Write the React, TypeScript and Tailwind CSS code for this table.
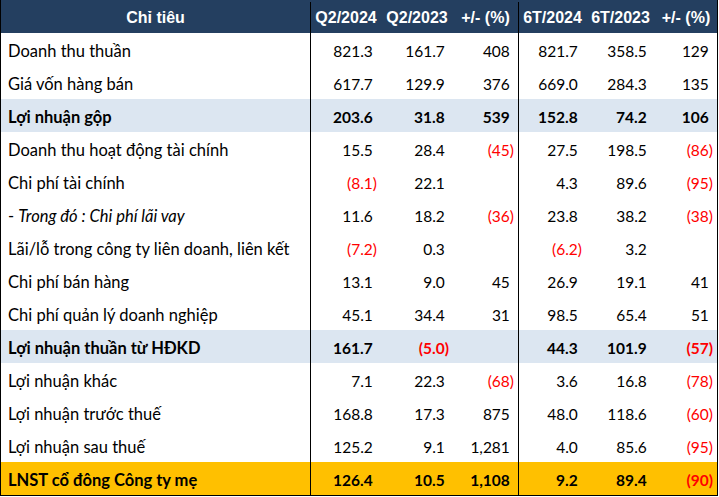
type Row = {
  label: string
  values: string[]
  tone?: "blue" | "yellow"
  italic?: boolean
}

const ROWS: Row[] = [
  { label: "Doanh thu thuần", values: ["821.3", "161.7", "408", "821.7", "358.5", "129"] },
  { label: "Giá vốn hàng bán", values: ["617.7", "129.9", "376", "669.0", "284.3", "135"] },
  { label: "Lợi nhuận gộp", values: ["203.6", "31.8", "539", "152.8", "74.2", "106"], tone: "blue" },
  { label: "Doanh thu hoạt động tài chính", values: ["15.5", "28.4", "(45)", "27.5", "198.5", "(86)"] },
  { label: "Chi phí tài chính", values: ["(8.1)", "22.1", "", "4.3", "89.6", "(95)"] },
  { label: "Trong đó : Chi phí lãi vay", values: ["11.6", "18.2", "(36)", "23.8", "38.2", "(38)"], italic: true },
  { label: "Lãi/lỗ trong công ty liên doanh, liên kết", values: ["(7.2)", "0.3", "", "(6.2)", "3.2", ""] },
  { label: "Chi phí bán hàng", values: ["13.1", "9.0", "45", "26.9", "19.1", "41"] },
  { label: "Chi phí quản lý doanh nghiệp", values: ["45.1", "34.4", "31", "98.5", "65.4", "51"] },
  { label: "Lợi nhuận thuần từ HĐKD", values: ["161.7", "(5.0)", "", "44.3", "101.9", "(57)"], tone: "blue" },
  { label: "Lợi nhuận khác", values: ["7.1", "22.3", "(68)", "3.6", "16.8", "(78)"] },
  { label: "Lợi nhuận trước thuế", values: ["168.8", "17.3", "875", "48.0", "118.6", "(60)"] },
  { label: "Lợi nhuận sau thuế", values: ["125.2", "9.1", "1,281", "4.0", "85.6", "(95)"] },
  { label: "LNST cổ đông Công ty mẹ", values: ["126.4", "10.5", "1,108", "9.2", "89.4", "(90)"], tone: "yellow" },
]

const HEADERS = ["Q2/2024", "Q2/2023", "+/- (%)", "6T/2024", "6T/2023", "+/- (%)"]

// widths of the six number columns (border of col 3 included)
const COL_CLASS = [
  "w-[70px]",
  "w-[72px]",
  "w-[66px] border-r border-black",
  "w-[67px]",
  "w-[69px]",
  "w-[62px]",
]

const ROW_BG = {
  blue: "bg-[#dce6f1] font-bold",
  yellow: "bg-[#ffc000] font-bold",
}

function NumberCell({ value, className }: { value: string; className: string }) {
  const negative = value.startsWith("(")
  return (
    <div className={`flex h-full items-center justify-end pr-[4px] pt-[4px] text-[15.5px] ${className}`}>
      {negative ? (
        <span className="text-[#ff0000]">{value}</span>
      ) : value ? (
        <span>
          {value}
          <span className="invisible">)</span>
        </span>
      ) : null}
    </div>
  )
}

export default function App() {
  return (
    <div className="h-[497px] w-[719px] bg-white">
      <div className="w-[718px] border-x border-b border-black font-['Lato',sans-serif] text-black">
        <div className="flex h-[33px] bg-[#243f60] pt-[2px] font-['Liberation_Sans',Arial,sans-serif] text-[16px] font-bold text-white">
          <div className="flex w-[310px] items-center justify-center border-r border-black">Chỉ tiêu</div>
          {HEADERS.map((h, i) => (
            <div key={i} className={`flex items-center justify-center whitespace-nowrap ${COL_CLASS[i]}`}>
              {h}
            </div>
          ))}
        </div>
        {ROWS.map((row) => (
          <div key={row.label} className={`flex h-[33px] ${row.tone ? ROW_BG[row.tone] : ""}`}>
            <div className="flex w-[310px] items-center whitespace-nowrap border-r border-black pl-[7px] pt-[4px] text-[16.5px]">
              {row.italic ? (
                <>
                  <span>-&nbsp;</span>
                  <span className="italic">{row.label}</span>
                </>
              ) : (
                row.label
              )}
            </div>
            {row.values.map((v, i) => (
              <NumberCell key={i} value={v} className={COL_CLASS[i]} />
            ))}
          </div>
        ))}
      </div>
    </div>
  )
}
